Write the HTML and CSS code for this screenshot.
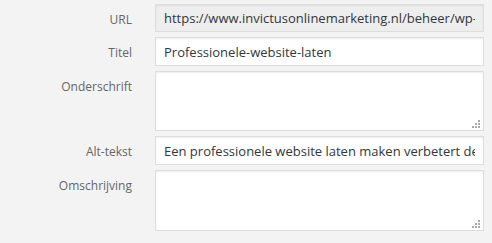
FILE: index.html
```html
<!DOCTYPE html>
<html lang="nl">
<head>
  <meta charset="UTF-8">
  <title>Bijlage details</title>
  <link rel="stylesheet" href="styles.css">
</head>
<body>

<div class="details">

  <label class="row">
    <span class="name">URL</span>
    <input type="text" class="readonly" value="https://www.invictusonlinemarketing.nl/beheer/wp-content/uploads/professionele-website-laten.jpg" readonly>
  </label>

  <label class="row">
    <span class="name">Titel</span>
    <input type="text" value="Professionele-website-laten">
  </label>

  <label class="row">
    <span class="name">Onderschrift</span>
    <span class="area">
      <textarea></textarea>
      <span class="grip"></span>
    </span>
  </label>

  <label class="row">
    <span class="name">Alt-tekst</span>
    <input type="text" value="Een professionele website laten maken verbetert de uitstraling van je bedrijf">
  </label>

  <label class="row">
    <span class="name">Omschrijving</span>
    <span class="area">
      <textarea class="tall"></textarea>
      <span class="grip"></span>
    </span>
  </label>

</div>

</body>
</html>
```

FILE: styles.css
```css
body {
  margin: 0;
  background-color: #f3f3f3;
  font-family: "Open Sans", sans-serif;
  font-size: 12px;
}
.details {
  padding-top: 4px;
}
.row {
  display: grid;
  grid-template-columns: 132px 329px;
  column-gap: 23px;
  margin-bottom: 5px;
}
.name {
  text-align: right;
  color: #666;
  padding-top: 7px;
  line-height: 18px;
}
input[type="text"], textarea {
  width: 100%;
  box-sizing: border-box;
  margin: 0;
  border: 1px solid #ddd;
  background: #fff;
  box-shadow: inset 0 1px 2px rgba(0, 0, 0, 0.07);
  color: #32373c;
  font-family: inherit;
  font-size: 13px;
  outline: none;
}
input[type="text"] {
  height: 29px;
  padding: 0 8px;
}
input.readonly {
  background: #eee;
  height: 28px;
}
.area {
  position: relative;
  display: block;
}
textarea {
  display: block;
  height: 60px;
  resize: none;
  padding: 4px 8px;
}
textarea.tall {
  height: 61px;
}
.grip {
  position: absolute;
  right: 4px;
  bottom: 3px;
  width: 8px;
  height: 8px;
  background:
    radial-gradient(#aaa 0 0) 6px 0 / 2px 2px no-repeat,
    radial-gradient(#aaa 0 0) 3px 3px / 2px 2px no-repeat,
    radial-gradient(#aaa 0 0) 6px 3px / 2px 2px no-repeat,
    radial-gradient(#aaa 0 0) 0 6px / 2px 2px no-repeat,
    radial-gradient(#aaa 0 0) 3px 6px / 2px 2px no-repeat,
    radial-gradient(#aaa 0 0) 6px 6px / 2px 2px no-repeat;
}
```
